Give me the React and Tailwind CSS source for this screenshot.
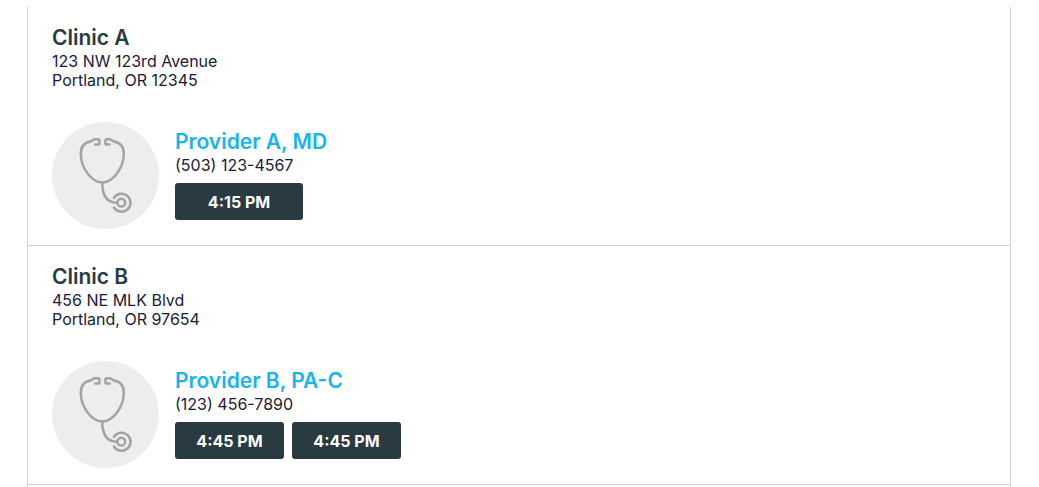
const clinics = [
  {
    name: 'Clinic A',
    street: '123 NW 123rd Avenue',
    city: 'Portland, OR 12345',
    provider: 'Provider A, MD',
    phone: '(503) 123-4567',
    times: ['4:15 PM'],
  },
  {
    name: 'Clinic B',
    street: '456 NE MLK Blvd',
    city: 'Portland, OR 97654',
    provider: 'Provider B, PA-C',
    phone: '(123) 456-7890',
    times: ['4:45 PM', '4:45 PM'],
  },
];

function Stethoscope() {
  return (
    <svg viewBox="0 0 107 107" className="size-full" fill="none" stroke="#a3a3a3" strokeWidth="2.5" strokeLinecap="round" strokeLinejoin="round" aria-hidden="true">
      <path d="M43.200 22.600h2.700c1 0 1.500-.5 1.500-1.400v-2.300c0-1-.5-1.600-1.500-1.600h-3c-1.700 0-2.500 1.700-4.300 2.200-6.500 1-9.800 5-9.800 12.200 0 14.200 10.600 28.700 21.400 28.700s21.600-14.500 21.600-28.700c0-7.200-3.500-11.200-10-12.200-1.800-.5-2.600-2.200-4.300-2.200h-2.600c-1 0-1.500.6-1.500 1.600v2.300c0 .9.500 1.400 1.500 1.400h2.700" />
      <path d="M50.300 61c0 11.500 4.300 19.700 14.800 19.700" />
      <circle cx="69.300" cy="80.700" r="3.900" />
      <path d="M61.900 75.900a9 9 0 1 1 0 9.600" />
    </svg>
  );
}

function Clinic({ clinic }) {
  return (
    <section className="border-b border-[#d2d2d2] px-6 py-4">
      <h2 className="text-[21px] leading-[29px] font-semibold text-[#293a41]">{clinic.name}</h2>
      <address className="leading-[19px] not-italic">
        {clinic.street}
        <br />
        {clinic.city}
      </address>
      <div className="mt-8 flex gap-4">
        <div className="size-[107px] shrink-0 rounded-full bg-[#ededed]">
          <Stethoscope />
        </div>
        <div className="pt-[5px]">
          <h3 className="text-[21px] leading-[29px] font-semibold text-[#1cb5e3]">{clinic.provider}</h3>
          <p className="leading-[19px]">{clinic.phone}</p>
          <div className="mt-2 flex flex-wrap gap-2">
            {clinic.times.map((time, i) => (
              <button
                key={i}
                type="button"
                className={`h-[37px] rounded-[3px] bg-[#293a41] font-bold text-white ${clinic.times.length === 1 ? 'w-32' : 'w-[109px]'}`}
              >
                {time}
              </button>
            ))}
          </div>
        </div>
      </div>
    </section>
  );
}

export default function App() {
  return (
    <main className="mr-7 ml-[27px] pt-[7px] font-['Inter',sans-serif] text-[16px] text-[#1b1b33]">
      <div className="border-x border-[#d2d2d2] pb-[2px]">
        {clinics.map((clinic) => (
          <Clinic key={clinic.name} clinic={clinic} />
        ))}
      </div>
    </main>
  );
}
